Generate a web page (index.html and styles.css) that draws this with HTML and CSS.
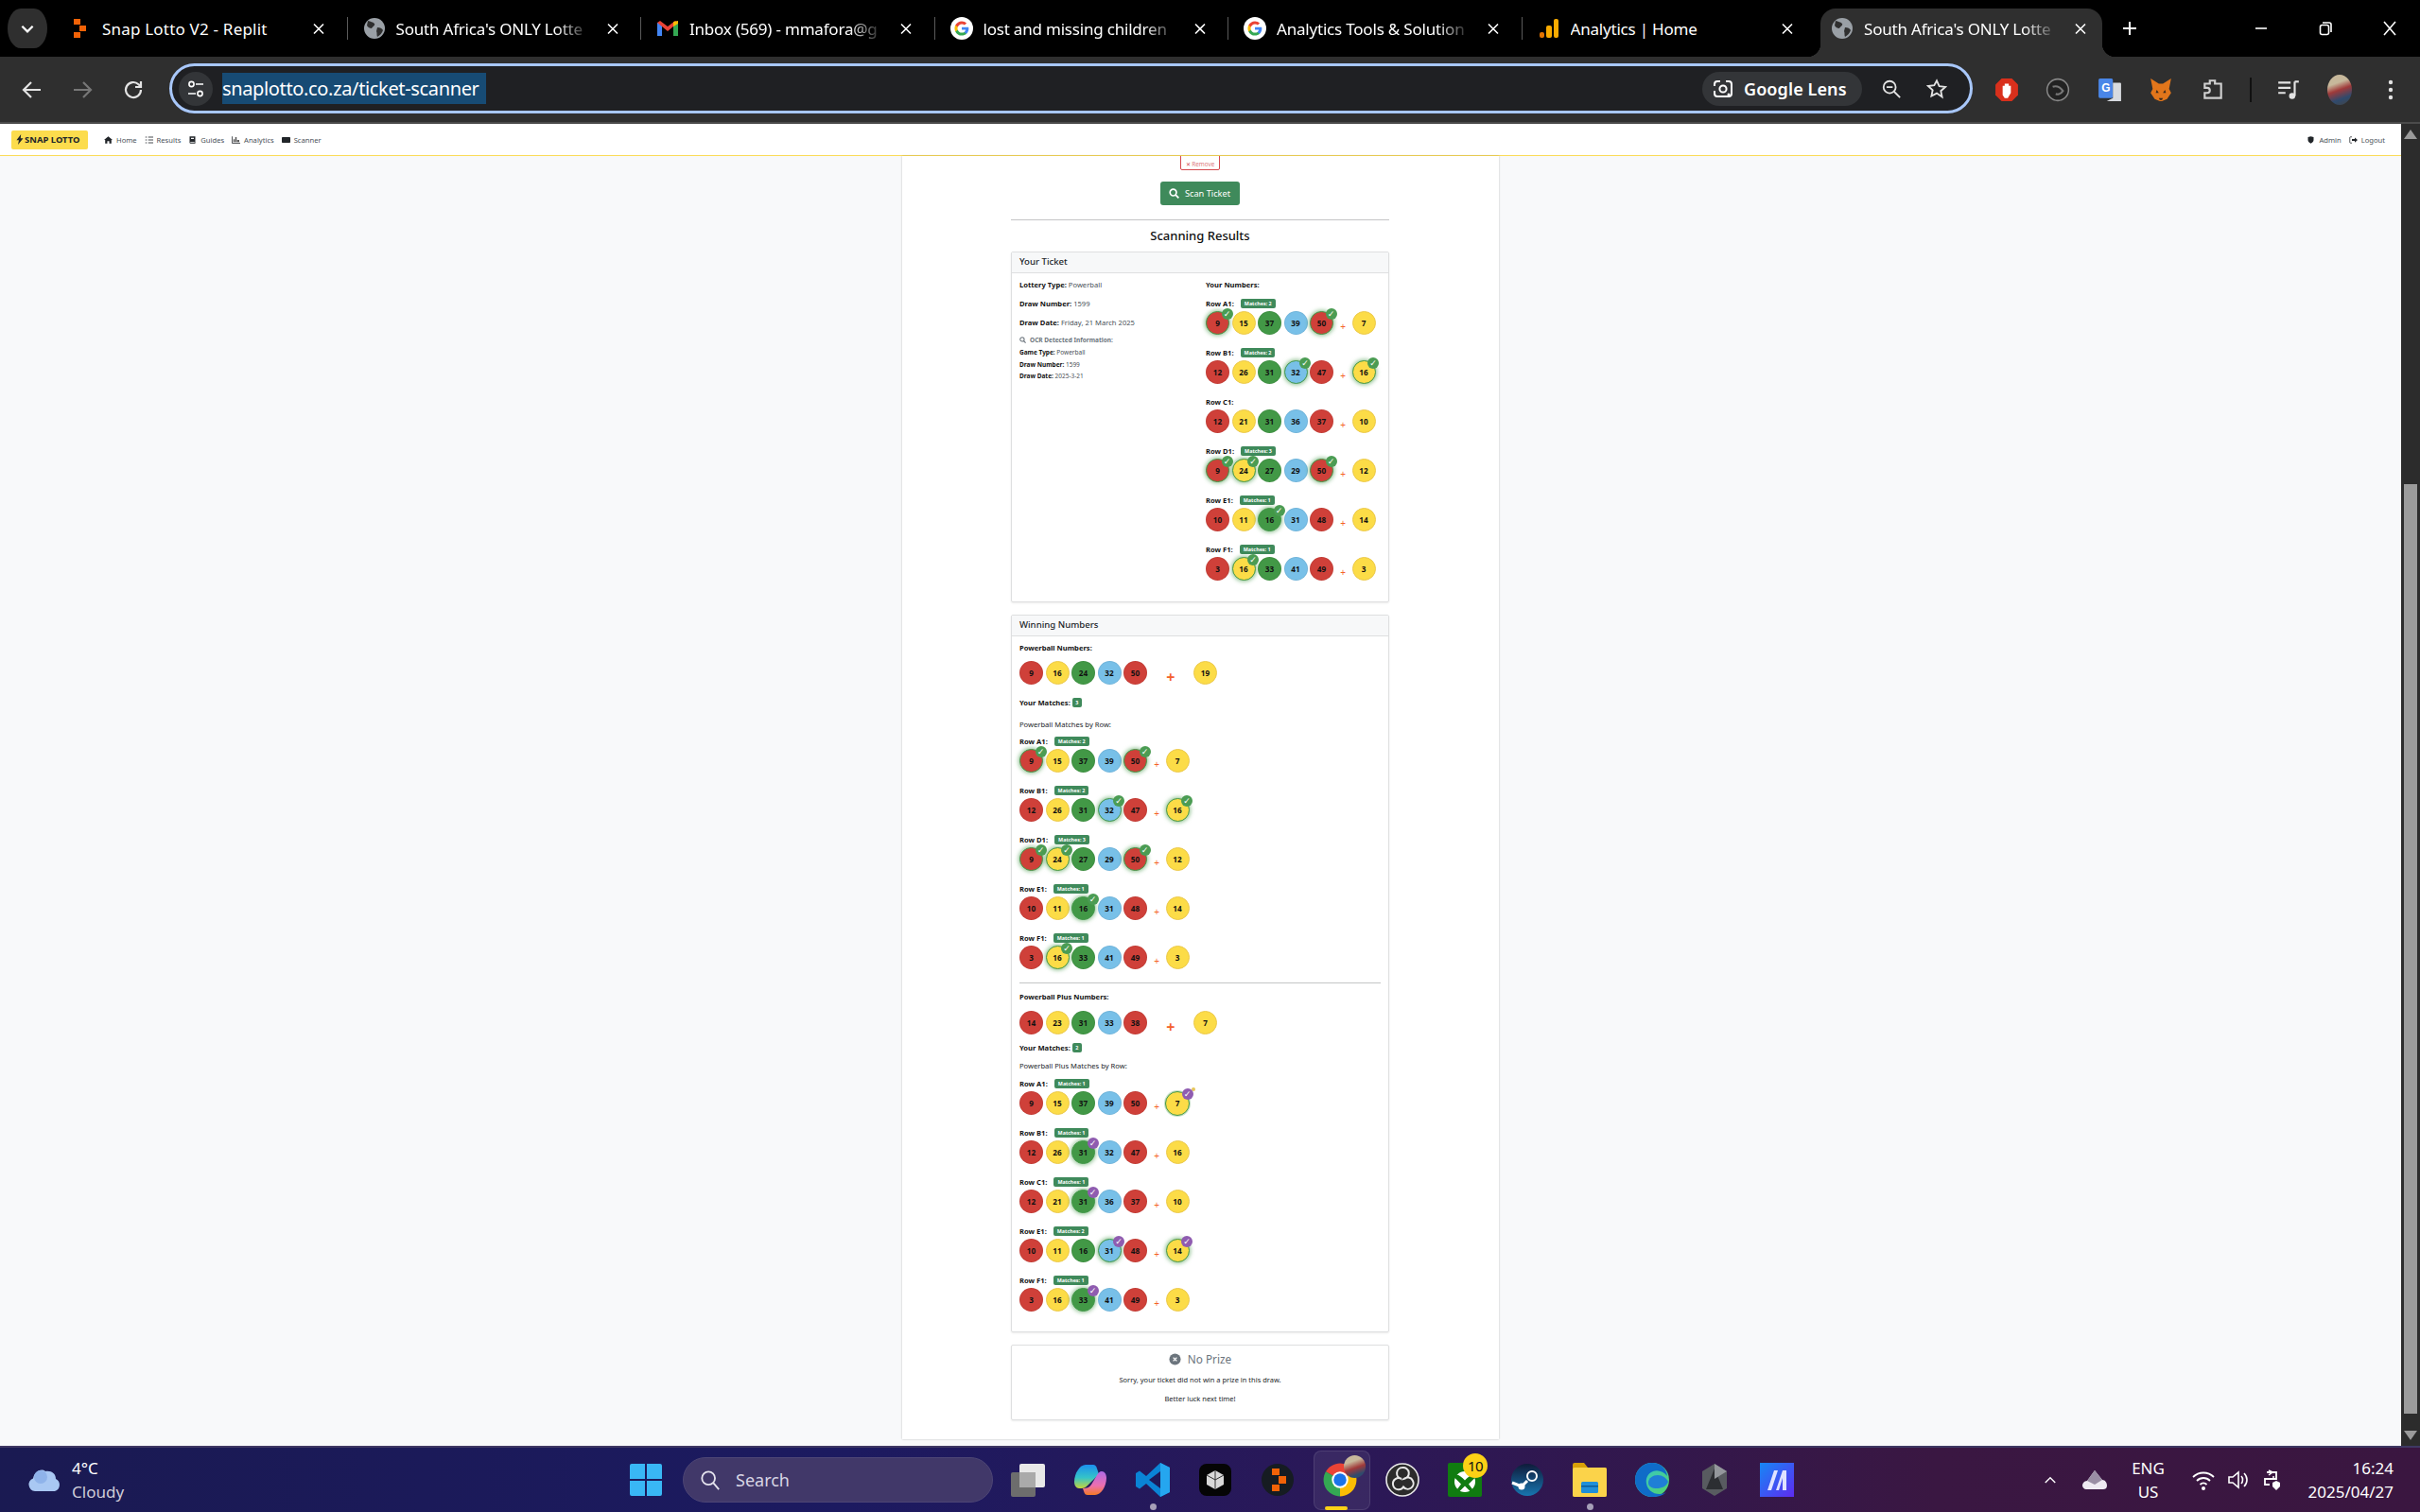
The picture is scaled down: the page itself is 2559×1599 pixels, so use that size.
FILE: index.html
```html
<!DOCTYPE html>
<html lang="en">
<head>
<meta charset="utf-8">
<title>South Africa's ONLY Lottery</title>
<link rel="stylesheet" href="styles.css">
</head>
<body>
<svg class="defs" aria-hidden="true">
  <symbol id="x" viewBox="0 0 12 12"><path d="M1 1l10 10M11 1L1 11" stroke="#fff" stroke-width="1.6" fill="none"/></symbol>
  <symbol id="globe" viewBox="0 0 24 24"><circle cx="12" cy="12" r="11" fill="#9aa0a6"/><path d="M5 4c3 1 5 1 7 3 1 2-2 3-3 5-2 0-4-1-5-3zM15 11c3 0 5 1 6 3-1 3-3 5-6 7-1-2 0-4-1-6z" fill="#2f2f2f"/></symbol>
  <symbol id="gg" viewBox="0 0 48 48"><circle cx="24" cy="24" r="24" fill="#fff"/><g transform="translate(7.5 7.5) scale(.69)"><path fill="#4285F4" d="M45.12 24.5c0-1.56-.14-3.06-.4-4.5H24v8.51h11.84c-.51 2.75-2.06 5.08-4.39 6.64v5.52h7.11c4.16-3.83 6.56-9.47 6.56-15.17z"/><path fill="#34A853" d="M24 46c5.94 0 10.92-1.97 14.56-5.33l-7.11-5.52c-1.97 1.32-4.49 2.1-7.45 2.1-5.73 0-10.58-3.87-12.31-9.07H4.34v5.7C7.96 41.07 15.4 46 24 46z"/><path fill="#FBBC05" d="M11.69 28.18C11.25 26.86 11 25.45 11 24s.25-2.86.69-4.18v-5.7H4.34C2.85 17.09 2 20.45 2 24c0 3.55.85 6.91 2.34 9.88l7.35-5.7z"/><path fill="#EA4335" d="M24 10.75c3.23 0 6.13 1.11 8.41 3.29l6.31-6.31C34.91 4.18 29.93 2 24 2 15.4 2 7.96 6.93 4.34 14.12l7.35 5.7c1.73-5.2 6.58-9.07 12.31-9.07z"/></g></symbol>
</svg>

<header class="tabstrip">
  <div class="tablist-btn"><svg class="ico-10" viewBox="0 0 12 8"><path d="M1 1.5l5 5 5-5" stroke="#fff" stroke-width="2" fill="none"/></svg></div>
  <div class="tab first">
    <svg class="fav" viewBox="0 0 24 24"><rect x="8" y="2" width="7" height="6" fill="#f26207"/><rect x="14" y="9" width="7" height="6" fill="#f26207"/><rect x="8" y="16" width="7" height="6" fill="#f26207"/></svg>
    <span class="tab-title wide">Snap Lotto V2 - Replit</span>
    <svg class="close"><use href="#x"/></svg>
  </div>
  <div class="tab sep">
    <svg class="fav"><use href="#globe"/></svg>
    <span class="tab-title fade">South Africa's ONLY Lotte</span>
    <svg class="close"><use href="#x"/></svg>
  </div>
  <div class="tab sep">
    <svg class="fav" viewBox="0 0 24 24"><path d="M1 20V6l3-2 8 6 8-6 3 2v14h-5V10l-6 5-6-5v10z" fill="#ea4335"/><path d="M1 6v14h5V10z" fill="#4285f4"/><path d="M23 6v14h-5V10z" fill="#34a853"/><path d="M18 5l5-1v3l-5 3z" fill="#fbbc04"/></svg>
    <span class="tab-title fade">Inbox (569) - mmafora@g</span>
    <svg class="close"><use href="#x"/></svg>
  </div>
  <div class="tab sep">
    <svg class="fav"><use href="#gg"/></svg>
    <span class="tab-title fade">lost and missing children</span>
    <svg class="close"><use href="#x"/></svg>
  </div>
  <div class="tab sep">
    <svg class="fav"><use href="#gg"/></svg>
    <span class="tab-title fade">Analytics Tools &amp; Solution</span>
    <svg class="close"><use href="#x"/></svg>
  </div>
  <div class="tab sep">
    <svg class="fav" viewBox="0 0 24 24"><rect x="2" y="16" width="5" height="6" rx="2" fill="#e37400"/><rect x="9" y="9" width="6" height="13" rx="2" fill="#f9ab00"/><rect x="17" y="2" width="5" height="20" rx="2" fill="#f9ab00"/></svg>
    <span class="tab-title">Analytics | Home</span>
    <svg class="close"><use href="#x"/></svg>
  </div>
  <div class="tab active">
    <svg class="fav"><use href="#globe"/></svg>
    <span class="tab-title fade">South Africa's ONLY Lotte</span>
    <svg class="close"><use href="#x"/></svg>
  </div>
  <svg class="newtab" viewBox="0 0 16 16"><path d="M8 1v14M1 8h14" stroke="#fff" stroke-width="2"/></svg>
  <div class="winctl">
    <svg class="ico-16" viewBox="0 0 16 16"><path d="M2 8h12" stroke="#fff" stroke-width="1.6"/></svg>
    <svg class="ico-16" viewBox="0 0 16 16"><rect x="2.5" y="4.5" width="9" height="10" rx="2" fill="none" stroke="#fff" stroke-width="1.6"/><path d="M5 2h7a2 2 0 0 1 2 2v8" fill="none" stroke="#fff" stroke-width="1.6"/></svg>
    <svg class="ico-16" viewBox="0 0 16 16"><path d="M2 1l12 14M14 1L2 15" stroke="#fff" stroke-width="1.6"/></svg>
  </div>
</header>

<nav class="toolbar">
  <svg class="tb-btn back" viewBox="0 0 24 24"><path d="M21 12H4M11 4l-8 8 8 8" stroke="#e3e3e3" stroke-width="2.2" fill="none"/></svg>
  <svg class="tb-btn fwd" viewBox="0 0 24 24"><path d="M3 12h17M13 4l8 8-8 8" stroke="#777" stroke-width="2.2" fill="none"/></svg>
  <svg class="tb-btn reload" viewBox="0 0 24 24"><path d="M20 12a8 8 0 1 1-2.5-5.8L20 8.5M20 3v6h-6" stroke="#e3e3e3" stroke-width="2.2" fill="none"/></svg>
  <div class="omnibox">
    <div class="site-chip"><svg class="ico-20" viewBox="0 0 20 20"><circle cx="5.5" cy="5" r="2.6" fill="none" stroke="#fff" stroke-width="1.6"/><path d="M10 5h8M2 15h8" stroke="#fff" stroke-width="1.6"/><circle cx="14.5" cy="15" r="2.6" fill="none" stroke="#fff" stroke-width="1.6"/></svg></div>
    <span class="url">snaplotto.co.za/ticket-scanner</span>
    <div class="lens">
      <svg class="ico-24" viewBox="0 0 24 24"><path d="M3 9V7a3 3 0 0 1 3-3h3M15 4h3a3 3 0 0 1 3 3v10a3 3 0 0 1-3 3H6a3 3 0 0 1-3-3v-3" fill="none" stroke="#fff" stroke-width="2"/><circle cx="12" cy="12" r="3.6" fill="none" stroke="#fff" stroke-width="2"/><circle cx="18" cy="18" r="1.5" fill="#fff"/></svg>
      <span>Google Lens</span>
    </div>
    <svg class="omni-ico" viewBox="0 0 24 24"><circle cx="10" cy="10" r="7" fill="none" stroke="#e3e3e3" stroke-width="2"/><path d="M15 15l7 7M6.5 10h7" stroke="#e3e3e3" stroke-width="2"/></svg>
    <svg class="omni-ico star" viewBox="0 0 24 24"><path d="M12 2.5l2.9 6.4 7 .8-5.2 4.7 1.4 6.9L12 17l-6.1 3.3 1.4-6.9-5.2-4.7 7-.8z" fill="none" stroke="#e3e3e3" stroke-width="2"/></svg>
  </div>
  <div class="exts">
    <svg class="ext" viewBox="0 0 24 24"><path d="M7 1h10l6 6v10l-6 6H7l-6-6V7z" fill="#d9301c"/><path d="M8 17V8h2v4-6h2v6-6h2v6-4h2v7l-3 5h-3z" fill="#fff"/></svg>
    <svg class="ext" viewBox="0 0 24 24"><circle cx="12" cy="12" r="10.5" fill="#222" stroke="#888" stroke-width="1.4"/><path d="M7 9c3-1 7 0 10 4-2 3-5 4-7 3" fill="none" stroke="#777" stroke-width="2"/></svg>
    <svg class="ext" viewBox="0 0 24 24"><rect x="1" y="1" width="14" height="19" rx="1.5" fill="#4a86e8"/><path d="M15 5h7a1 1 0 0 1 1 1v17H9l6-3z" fill="#d8dbe0"/><text class="ext-g" x="4" y="14">G</text></svg>
    <svg class="ext" viewBox="0 0 24 24"><path d="M2 1l8 5h4l8-5-2 10 2 4-4 6-5 2h-2l-5-2-4-6 2-4z" fill="#e2761b"/><path d="M8 12l2 3H7zM16 12l-2 3h3zM10 20h4l-1 2h-2z" fill="#3a2a1c"/></svg>
    <svg class="ext" viewBox="0 0 24 24"><path d="M4 6h5V3h5v3h6v14H4v-5h2.5a2 2 0 0 0 0-5H4z" fill="none" stroke="#d0d0d0" stroke-width="2"/></svg>
    <span class="ext-sep"></span>
    <svg class="ext" viewBox="0 0 24 24"><path d="M2 5h12M2 10h12M2 15h7" stroke="#e3e3e3" stroke-width="2"/><path d="M18 4v14" stroke="#e3e3e3" stroke-width="2"/><circle cx="15.5" cy="18" r="3" fill="#e3e3e3"/><path d="M18 4h4" stroke="#e3e3e3" stroke-width="2"/></svg>
    <span class="avatar"></span>
    <svg class="ext dots" viewBox="0 0 6 24"><circle cx="3" cy="4" r="2.2" fill="#e3e3e3"/><circle cx="3" cy="12" r="2.2" fill="#e3e3e3"/><circle cx="3" cy="20" r="2.2" fill="#e3e3e3"/></svg>
  </div>
</nav>

<div class="viewport">
  <main class="page">
    <div class="sitenav">
      <a class="brand"><svg class="bolt" viewBox="0 0 10 14"><path d="M6.5 0L0.5 8h3.2L2.5 14l7-8.6H6z" fill="#212529"/></svg>SNAP LOTTO</a>
      <a class="navlink first-link"><svg class="nico" viewBox="0 0 12 10"><path d="M6 0L0 5h1.6v5h3V6.8h2.8V10h3V5H12z" fill="#212529"/></svg>Home</a>
      <a class="navlink"><svg class="nico" viewBox="0 0 12 10"><path d="M5 1h7M5 5h7M5 9h7M1 1h2M1 5h2M1 9h2" stroke="#212529" stroke-width="1.1"/></svg>Results</a>
      <a class="navlink"><svg class="nico" viewBox="0 0 12 10"><path d="M2 0h8v10H3a1.6 1.6 0 0 1-1-1z" fill="#212529"/><rect x="4" y="2" width="4" height="1.6" fill="#fff"/><rect x="3" y="7.6" width="6" height="1" fill="#fff"/></svg>Guides</a>
      <a class="navlink"><svg class="nico" viewBox="0 0 12 10"><path d="M.6 0v9.5H12" fill="none" stroke="#212529" stroke-width="1.1"/><rect x="2.4" y="4" width="2" height="4" fill="#555"/><rect x="5" y="1" width="2" height="7" fill="#555"/><rect x="7.6" y="5" width="3" height="3" fill="#555"/></svg>Analytics</a>
      <a class="navlink"><svg class="nico" viewBox="0 0 12 10"><rect x="0" y="1" width="12" height="8" rx="1" fill="#212529"/></svg>Scanner</a>
      <span class="nav-spacer"></span>
      <a class="navlink"><svg class="nico" viewBox="0 0 12 10"><path d="M6 0l4 1v4c0 2.5-2 4-4 5-2-1-4-2.500-4-5V1z" fill="#212529"/></svg>Admin</a>
      <a class="navlink"><svg class="nico" viewBox="0 0 12 10"><path d="M4 .7H2a1 1 0 0 0-1 1v6.600a1 1 0 0 0 1 1h2" fill="none" stroke="#212529"/><path d="M4 3.800h4V1.500L12 5 8 8.500V6.200H4z" fill="#212529"/></svg>Logout</a>
    </div>

    <div class="card">
      <div class="col">
        <div class="remove-wrap"><span class="remove"><span class="remove-x">✕</span> Remove</span></div>
        <div class="scan-wrap"><a class="scan"><svg class="scan-ico" viewBox="0 0 12 12"><circle cx="5" cy="5" r="3.700" fill="none" stroke="#fff" stroke-width="1.800"/><path d="M7.800 7.800L11.300 11.300" stroke="#fff" stroke-width="2"/></svg>Scan Ticket</a></div>
        <hr class="rule rule-top">
        <h2 class="results-title">Scanning Results</h2>

        <section class="panel ticket">
          <h3 class="panel-head">Your Ticket</h3>
          <div class="panel-body ticket-grid">
            <div class="info">
              <p class="line"><b>Lottery Type:</b> <span class="val">Powerball</span></p>
              <p class="line"><b>Draw Number:</b> <span class="val">1599</span></p>
              <p class="line"><b>Draw Date:</b> <span class="val">Friday, 21 March 2025</span></p>
              <p class="ocr-title"><svg class="ocr-ico" viewBox="0 0 12 12"><circle cx="5" cy="5" r="3.700" fill="none" stroke="#6c757d" stroke-width="1.800"/><path d="M7.800 7.800L11.300 11.300" stroke="#6c757d" stroke-width="2"/></svg>OCR Detected Information:</p>
              <p class="ocr"><b>Game Type:</b> <span class="val">Powerball</span></p>
              <p class="ocr"><b>Draw Number:</b> <span class="val">1599</span></p>
              <p class="ocr"><b>Draw Date:</b> <span class="val">2025-3-21</span></p>
            </div>
            <div class="numbers">
              <p class="line line-num"><b>Your Numbers:</b></p>
              <div class="row"><div class="row-head"><b>Row A1:</b><span class="badge">Matches: 2</span></div><div class="balls"><span class="ball red hit">9</span><span class="ball yellow">15</span><span class="ball green">37</span><span class="ball blue">39</span><span class="ball red hit">50</span><span class="plus">+</span><span class="ball yellow">7</span></div></div>
              <div class="row"><div class="row-head"><b>Row B1:</b><span class="badge">Matches: 2</span></div><div class="balls"><span class="ball red">12</span><span class="ball yellow">26</span><span class="ball green">31</span><span class="ball blue hit">32</span><span class="ball red">47</span><span class="plus">+</span><span class="ball yellow hit">16</span></div></div>
              <div class="row"><div class="row-head"><b>Row C1:</b></div><div class="balls"><span class="ball red">12</span><span class="ball yellow">21</span><span class="ball green">31</span><span class="ball blue">36</span><span class="ball red">37</span><span class="plus">+</span><span class="ball yellow">10</span></div></div>
              <div class="row"><div class="row-head"><b>Row D1:</b><span class="badge">Matches: 3</span></div><div class="balls"><span class="ball red hit">9</span><span class="ball yellow hit">24</span><span class="ball green">27</span><span class="ball blue">29</span><span class="ball red hit">50</span><span class="plus">+</span><span class="ball yellow">12</span></div></div>
              <div class="row"><div class="row-head"><b>Row E1:</b><span class="badge">Matches: 1</span></div><div class="balls"><span class="ball red">10</span><span class="ball yellow">11</span><span class="ball green hit">16</span><span class="ball blue">31</span><span class="ball red">48</span><span class="plus">+</span><span class="ball yellow">14</span></div></div>
              <div class="row"><div class="row-head"><b>Row F1:</b><span class="badge">Matches: 1</span></div><div class="balls"><span class="ball red">3</span><span class="ball yellow hit">16</span><span class="ball green">33</span><span class="ball blue">41</span><span class="ball red">49</span><span class="plus">+</span><span class="ball yellow">3</span></div></div>
            </div>
          </div>
        </section>

        <section class="panel winning">
          <h3 class="panel-head">Winning Numbers</h3>
          <div class="panel-body">
            <p class="line draw-title"><b>Powerball Numbers:</b></p>
            <div class="balls draw-balls"><span class="ball red">9</span><span class="ball yellow">16</span><span class="ball green">24</span><span class="ball blue">32</span><span class="ball red">50</span><span class="plus big">+</span><span class="ball yellow">19</span></div>
            <p class="line matches-a"><b>Your Matches:</b> <span class="badge tiny">3</span></p>
            <p class="line by-row">Powerball Matches by Row:</p>
            <div class="row"><div class="row-head"><b>Row A1:</b><span class="badge">Matches: 2</span></div><div class="balls"><span class="ball red hit">9</span><span class="ball yellow">15</span><span class="ball green">37</span><span class="ball blue">39</span><span class="ball red hit">50</span><span class="plus">+</span><span class="ball yellow">7</span></div></div>
            <div class="row"><div class="row-head"><b>Row B1:</b><span class="badge">Matches: 2</span></div><div class="balls"><span class="ball red">12</span><span class="ball yellow">26</span><span class="ball green">31</span><span class="ball blue hit">32</span><span class="ball red">47</span><span class="plus">+</span><span class="ball yellow hit">16</span></div></div>
            <div class="row"><div class="row-head"><b>Row D1:</b><span class="badge">Matches: 3</span></div><div class="balls"><span class="ball red hit">9</span><span class="ball yellow hit">24</span><span class="ball green">27</span><span class="ball blue">29</span><span class="ball red hit">50</span><span class="plus">+</span><span class="ball yellow">12</span></div></div>
            <div class="row"><div class="row-head"><b>Row E1:</b><span class="badge">Matches: 1</span></div><div class="balls"><span class="ball red">10</span><span class="ball yellow">11</span><span class="ball green hit">16</span><span class="ball blue">31</span><span class="ball red">48</span><span class="plus">+</span><span class="ball yellow">14</span></div></div>
            <div class="row"><div class="row-head"><b>Row F1:</b><span class="badge">Matches: 1</span></div><div class="balls"><span class="ball red">3</span><span class="ball yellow hit">16</span><span class="ball green">33</span><span class="ball blue">41</span><span class="ball red">49</span><span class="plus">+</span><span class="ball yellow">3</span></div></div>
            <hr class="rule">
            <p class="line plus-title"><b>Powerball Plus Numbers:</b></p>
            <div class="balls plus-balls"><span class="ball red">14</span><span class="ball yellow">23</span><span class="ball green">31</span><span class="ball blue">33</span><span class="ball red">38</span><span class="plus big">+</span><span class="ball yellow">7</span></div>
            <p class="line matches-b"><b>Your Matches:</b> <span class="badge tiny">2</span></p>
            <p class="line by-row-b">Powerball Plus Matches by Row:</p>
            <div class="row"><div class="row-head"><b>Row A1:</b><span class="badge">Matches: 1</span></div><div class="balls"><span class="ball red">9</span><span class="ball yellow">15</span><span class="ball green">37</span><span class="ball blue">39</span><span class="ball red">50</span><span class="plus">+</span><span class="ball yellow hit pp star">7</span></div></div>
            <div class="row"><div class="row-head"><b>Row B1:</b><span class="badge">Matches: 1</span></div><div class="balls"><span class="ball red">12</span><span class="ball yellow">26</span><span class="ball green hit pp">31</span><span class="ball blue">32</span><span class="ball red">47</span><span class="plus">+</span><span class="ball yellow">16</span></div></div>
            <div class="row"><div class="row-head"><b>Row C1:</b><span class="badge">Matches: 1</span></div><div class="balls"><span class="ball red">12</span><span class="ball yellow">21</span><span class="ball green hit pp">31</span><span class="ball blue">36</span><span class="ball red">37</span><span class="plus">+</span><span class="ball yellow">10</span></div></div>
            <div class="row"><div class="row-head"><b>Row E1:</b><span class="badge">Matches: 2</span></div><div class="balls"><span class="ball red">10</span><span class="ball yellow">11</span><span class="ball green">16</span><span class="ball blue hit pp">31</span><span class="ball red">48</span><span class="plus">+</span><span class="ball yellow hit pp">14</span></div></div>
            <div class="row"><div class="row-head"><b>Row F1:</b><span class="badge">Matches: 1</span></div><div class="balls"><span class="ball red">3</span><span class="ball yellow">16</span><span class="ball green hit pp">33</span><span class="ball blue">41</span><span class="ball red">49</span><span class="plus">+</span><span class="ball yellow">3</span></div></div>
          </div>
        </section>

        <section class="panel prize">
          <h3 class="prize-title"><svg class="prize-ico" viewBox="0 0 14 14"><circle cx="7" cy="7" r="6.500" fill="#6c757d"/><path d="M5 5l4 4M9 5l-4 4" stroke="#fff" stroke-width="1.400"/></svg>No Prize</h3>
          <p class="prize-text">Sorry, your ticket did not win a prize in this draw.</p>
          <p class="prize-text">Better luck next time!</p>
        </section>
      </div>
    </div>
  </main>
  <aside class="scrollbar">
    <span class="sb-up"></span>
    <div class="sb-track"><span class="sb-thumb"></span></div>
    <span class="sb-down"></span>
  </aside>
</div>

<footer class="taskbar">
  <div class="weather">
    <svg class="cloud" viewBox="0 0 36 26"><path d="M8 25a7 7 0 0 1-2-13.500C7 5 14 0 19 4c6-1 11 2 11 8a7 7 0 0 1-1 13z" fill="#a9c8f3"/><circle cx="14" cy="10" r="7" fill="#8fb3ea"/></svg>
    <div class="weather-text"><span>4°C</span><span class="dim">Cloudy</span></div>
  </div>
  <div class="slot win-slot"><svg class="ic-34" viewBox="0 0 34 34"><path d="M0 2a2 2 0 0 1 2-2h14v16H0zM18 0h14a2 2 0 0 1 2 2v14H18zM0 18h16v16H2a2 2 0 0 1-2-2zM18 18h16v14a2 2 0 0 1-2 2H18z" fill="#39b7f5"/></svg></div>
  <div class="search"><svg class="search-ico" viewBox="0 0 24 24"><circle cx="10" cy="10" r="7.500" fill="none" stroke="#e5e3ee" stroke-width="2"/><path d="M15.500 15.500L22 23" stroke="#e5e3ee" stroke-width="2"/></svg><span>Search</span></div>
  <div class="slots">
    <div class="slot"><svg class="ic-36" viewBox="0 0 36 36"><rect x="0" y="10" width="26" height="26" rx="2" fill="#6d6d6d"/><rect x="9" y="1" width="27" height="25" rx="2" fill="#e8e8e8"/><rect x="9" y="10" width="17" height="16" fill="#aaa"/></svg></div>
    <div class="slot"><svg class="ic-34" viewBox="0 0 34 34"><defs><linearGradient id="cpa" x1="0" y1="0" x2="0" y2="1"><stop offset="0" stop-color="#1b8fee"/><stop offset=".55" stop-color="#35c4c8"/><stop offset="1" stop-color="#c6d43a"/></linearGradient><linearGradient id="cpb" x1="0" y1="0" x2="0" y2="1"><stop offset="0" stop-color="#b06ae6"/><stop offset=".6" stop-color="#ec6fb0"/><stop offset="1" stop-color="#f47a25"/></linearGradient></defs><path d="M12 1h8c2 0 3 1 4 4l2 6-12 12c-2 2-4 3-6 3H5c-3 0-5-3-5-7C0 10 6 1 12 1z" fill="url(#cpa)"/><path d="M29 8c3 0 5 3 5 7 0 9-6 18-12 18h-8c-2 0-3-1-4-4l-1-3c4 0 7-1 9-4l6-10c1-2 3-4 5-4z" fill="url(#cpb)"/></svg></div>
    <div class="slot"><svg class="ic-36" viewBox="0 0 36 36"><path d="M26 0l10 5v26l-10 5-15-14-7 5.500L0 25v-14l4-2.500 7 5.500z" fill="#0a84d6"/><path d="M26 9v18l-12-9z" fill="#1d1a5a"/><path d="M26 0l10 5v26l-10 5z" fill="#25a6ef"/></svg><i class="dot"></i></div>
    <div class="slot"><svg class="ic-34" viewBox="0 0 34 34"><rect width="34" height="34" rx="8" fill="#050505"/><path d="M17 7l9 5v10l-9 5-9-5V12z" fill="#d8d8d8"/><path d="M17 7v10l9-5M17 17l-9-5M17 17v10" stroke="#333" fill="none"/></svg></div>
    <div class="slot"><svg class="ic-34" viewBox="0 0 34 34"><circle cx="17" cy="17" r="17" fill="#161c22"/><rect x="11" y="5" width="8" height="7" fill="#f26207"/><rect x="18" y="13" width="8" height="8" fill="#f26207"/><rect x="11" y="22" width="8" height="7" fill="#f26207"/></svg></div>
    <div class="slot chrome-slot">
      <svg class="ic-38" viewBox="0 0 48 48"><path d="M24 24L4.950 13A22 22 0 0 1 43.050 13Z" fill="#ea4335"/><path d="M24 24L43.050 13A22 22 0 0 1 24 46Z" fill="#fbbc04"/><path d="M24 24L24 46A22 22 0 0 1 4.950 13Z" fill="#34a853"/><circle cx="24" cy="24" r="11" fill="#fff"/><circle cx="24" cy="24" r="8.500" fill="#1a73e8"/></svg>
      <span class="chrome-avatar"></span>
      <i class="active-bar"></i>
    </div>
    <div class="slot"><svg class="ic-36" viewBox="0 0 36 36"><circle cx="18" cy="18" r="17" fill="#2b2b2b" stroke="#e8e8e8" stroke-width="1.600"/><path d="M18 5a6 6 0 0 0-1 11.900 6 6 0 0 0-9 6.100 6 6 0 0 0 11 2.500 6 6 0 0 0 10-6.500A6 6 0 0 0 19.500 17 6 6 0 0 0 18 5z" fill="none" stroke="#e8e8e8" stroke-width="2"/></svg></div>
    <div class="slot xbox"><svg class="ic-36" viewBox="0 0 36 36"><rect width="36" height="36" rx="2" fill="#107c10"/><circle cx="18" cy="20" r="11" fill="#fff"/><path d="M18 18.500c3-3 6-6 9-6l2 3-7 7 6 8h-4l-6-6-6 6H8l6-8-7-7 2-3c3 0 6 3 9 6z" fill="#107c10"/></svg><span class="xbox-badge">10</span></div>
    <div class="slot"><svg class="ic-34" viewBox="0 0 34 34"><defs><linearGradient id="st" x1="0" y1="0" x2="0" y2="1"><stop offset="0" stop-color="#0f1b3a"/><stop offset="1" stop-color="#1776b0"/></linearGradient></defs><circle cx="17" cy="17" r="17" fill="url(#st)"/><circle cx="22" cy="13" r="5" fill="none" stroke="#fff" stroke-width="2"/><path d="M1 20l10 4 6-6" stroke="#fff" stroke-width="3" fill="none"/><circle cx="11" cy="24" r="3.500" fill="#fff"/></svg></div>
    <div class="slot"><svg class="ic-36" viewBox="0 0 36 36"><path d="M0 2a2 2 0 0 1 2-2h10l4 5h18a2 2 0 0 1 2 2v27a2 2 0 0 1-2 2H2a2 2 0 0 1-2-2z" fill="#d9a008"/><rect y="5" width="36" height="31" rx="2" fill="#fbd34a"/><rect x="9" y="20" width="18" height="12" rx="1.500" fill="#1f8fd8"/><rect x="9" y="24" width="18" height="1.500" fill="#0b5a96"/></svg><i class="dot"></i></div>
    <div class="slot"><svg class="ic-36" viewBox="0 0 36 36"><defs><linearGradient id="ed" x1="0" y1="0" x2="1" y2="1"><stop offset="0" stop-color="#2fc4dd"/><stop offset="1" stop-color="#55d464"/></linearGradient></defs><circle cx="18" cy="18" r="18" fill="url(#ed)"/><path d="M0 18C0 8 8 0 18 0c9 0 15 6 16 14-4-5-10-7-15-5-6 2-8 8-7 13 1 6 6 11 14 11 3 0 5-1 7-2-4 4-9 5-15 5C8 36 0 28 0 18z" fill="#0f6cc8"/><path d="M14 21c0-5 5-8 10-8 5 0 9 3 11 7-2 5-7 7-12 7-5 0-9-2-9-6z" fill="#1f7fd6"/></svg></div>
    <div class="slot"><svg class="ic-34" viewBox="0 0 34 34"><path d="M17 0l13 8v18l-13 8-13-8V8z" fill="#585b60"/><path d="M17 5l9 22H8z" fill="#2c2e32"/><path d="M17 0l13 8-13 8z" fill="#94979c"/></svg></div>
    <div class="slot"><svg class="ic-36" viewBox="0 0 36 36"><defs><linearGradient id="ai" x1="0" y1="0" x2="1" y2="1"><stop offset="0" stop-color="#1687f5"/><stop offset="1" stop-color="#5e2bf0"/></linearGradient></defs><rect width="36" height="36" fill="url(#ai)"/><path d="M8 29L15 8h4L12 29zM17 29L24 8h4v21h-4v-13l-4 13z" fill="#dfe3ff"/></svg></div>
  </div>
  <div class="tray">
    <svg class="tray-chev" viewBox="0 0 16 10"><path d="M2 8.500l6-6 6 6" stroke="#fff" stroke-width="1.600" fill="none"/></svg>
    <svg class="tray-drive" viewBox="0 0 26 22"><path d="M13 1l8 10c3 0 5 3 5 6s-2 4-4 4H4c-2 0-4-2-4-4s2-5 5-5z" fill="#efeaf2"/><path d="M13 1l-8 11 8 4 8-5z" fill="#9a8ea4"/></svg>
    <div class="lang"><span>ENG</span><span>US</span></div>
    <svg class="tray-ic wifi" viewBox="0 0 24 24"><path d="M1 9c6-6 16-6 22 0M5 13c4-4 10-4 14 0M8.500 17c2-2 5-2 7 0" fill="none" stroke="#fff" stroke-width="1.800"/><circle cx="12" cy="21" r="2" fill="#fff"/></svg>
    <svg class="tray-ic" viewBox="0 0 24 24"><path d="M2 9h4l6-5v16l-6-5H2z" fill="none" stroke="#fff" stroke-width="1.600"/><path d="M15 8c2 2 2 6 0 8M18 5c4 4 4 10 0 14" fill="none" stroke="#fff" stroke-width="1.600"/></svg>
    <svg class="tray-ic batt" viewBox="0 0 24 24"><path d="M7 4h10v7H5v6h5" fill="none" stroke="#fff" stroke-width="1.800"/><path d="M9 2l4 2-4 3M14 8v4" stroke="#fff" stroke-width="1.500" fill="none"/><path d="M13 15l4-2 4 2v4l-4 4-4-4z" fill="#fff"/></svg>
    <div class="clock"><span>16:24</span><span>2025/04/27</span></div>
  </div>
</footer>
</body>
</html>
```

FILE: styles.css
```css
* { box-sizing: border-box; }
html, body { margin: 0; padding: 0; width: 2559px; height: 1599px; overflow: hidden; background: #000; font-family: "Noto Sans", "Open Sans", sans-serif; }
p, h2, h3 { margin: 0; font-weight: normal; }
svg { display: block; flex: none; }
.defs { position: absolute; width: 0; height: 0; }

/* tab strip */
.tabstrip { height: 60px; background: #000; display: flex; padding-left: 8px; position: relative; }
.tablist-btn { width: 42px; height: 42px; margin-top: 9px; border-radius: 14px / 21px; background: #2f2f2f; display: flex; align-items: center; justify-content: center; margin-right: 6px; }
.ico-10 { width: 14px; height: 9px; }
.tab { width: 310.5px; height: 51px; margin-top: 9px; padding-left: 17px; display: flex; align-items: center; position: relative; color: #fff; font-size: 17px; flex: none; }
.tab.first { padding-left: 14px; }
.tab.sep::before { content: ""; position: absolute; left: 0; top: 9px; width: 1px; height: 24px; background: #5a5a5a; }
.tab.active { width: 298px; margin-left: 6px; padding-left: 11px; background: #2f2f2f; border-radius: 16px 16px 0 0; }
.tab.active::before, .tab.active::after { content: ""; position: absolute; bottom: 0; width: 14px; height: 14px; background: radial-gradient(circle at 0 0, transparent 14px, #2f2f2f 14.5px); }
.tab.active::before { left: -14px; }
.tab.active::after { right: -14px; background: radial-gradient(circle at 100% 0, transparent 14px, #2f2f2f 14.5px); }
.fav { width: 24px; height: 24px; margin-top: -9px; }
.tab-title { margin-left: 11px; width: 206px; white-space: nowrap; overflow: hidden; margin-top: -9px; letter-spacing: -.2px; }
.tab-title.wide { letter-spacing: .2px; }
.tab.first .tab-title { margin-left: 14px; }
.tab-title.fade { -webkit-mask-image: linear-gradient(90deg, #000 82%, transparent 100%); mask-image: linear-gradient(90deg, #000 82%, transparent 100%); color: #fff; }
.close { width: 12px; height: 13px; margin-left: 17px; margin-top: -9px; }
.newtab { width: 16px; height: 16px; margin: 22px 0 0 21px; }
.winctl { margin-left: auto; display: flex; padding: 22px 24px 0 0; gap: 52px; }
.ico-16 { width: 16px; height: 16px; }

/* toolbar */
.toolbar { height: 71px; background: #2f2f2f; border-bottom: 2px solid #4b4b4b; display: flex; align-items: flex-start; }
.tb-btn { width: 24px; height: 24px; margin-top: 23px; }
.tb-btn.back { margin-left: 22px; }
.tb-btn.fwd { margin-left: 29px; }
.tb-btn.reload { margin-left: 29.500px; }
.omnibox { width: 1907px; height: 53px; margin: 7px 0 0 26.500px; border: 3px solid #a8c7fa; border-radius: 27px; background: #1f2023; display: flex; align-items: center; padding-left: 7px; }
.site-chip { width: 36px; height: 36px; border-radius: 50%; background: #333538; display: flex; align-items: center; justify-content: center; }
.ico-20 { width: 20px; height: 20px; }
.url { height: 33px; line-height: 33px; width: 279px; margin-left: 10px; background: #174b74; color: #fff; font-size: 20px; letter-spacing: -.35px; white-space: nowrap; overflow: hidden; }
.lens { margin-left: auto; width: 169px; height: 36px; border-radius: 18px; background: #333538; display: flex; align-items: center; padding-left: 10px; color: #fff; font-size: 18px; font-weight: 600; gap: 10px; letter-spacing: .1px; white-space: nowrap; }
.ico-24 { width: 24px; height: 24px; }
.omni-ico { width: 22px; height: 22px; margin-left: 20px; }
.omni-ico.star { margin-left: 26px; margin-right: 24px; }
.exts { display: flex; align-items: center; height: 30px; margin-top: 20px; margin-left: 23px; }
.ext { width: 26px; height: 26px; margin-right: 28.400px; }
.ext-g { font: bold 11px "Liberation Sans", sans-serif; fill: #fff; }
.ext-sep { width: 2px; height: 26px; background: #111; margin: 0 26px 0 -2px; }
.avatar { width: 26px; height: 32px; border-radius: 50%; background: linear-gradient(160deg, #c7b89b 0 30%, #a03a3a 50%, #2f4a6d 75%, #444); margin: 0 38px 0 0; flex: none; }
.dots { width: 6px; margin: 0; }

/* viewport */
.viewport { height: 1398px; display: flex; background: #f8f9fa; }
.page { width: 2539px; height: 1398px; overflow: hidden; display: flex; flex-direction: column; }
.sitenav { height: 34px; flex: none; background: #fff; border-bottom: 1px solid #fbdc58; display: flex; align-items: center; padding: 0 17px 0 12px; font-size: 7.6px; color: #495057; }
.brand { width: 81px; height: 20px; background: #fcdc4d; border-radius: 2px; display: flex; align-items: center; padding-left: 5px; color: #212529; font-weight: 700; font-size: 9.4px; letter-spacing: .05px; white-space: nowrap; }
.bolt { width: 8px; height: 11px; margin-right: 1px; }
.navlink { display: flex; align-items: center; margin-right: 8px; gap: 4px; white-space: nowrap; }
.first-link { margin-left: 17px; }
.navlink:last-child { margin-right: 0; }
.nico { width: 9px; height: 8px; }
.nav-spacer { flex: 1; }

.card { width: 631px; height: 1357px; margin: 0 auto; flex: none; background: #fff; box-shadow: 0 0 2px rgba(0,0,0,.25); overflow: hidden; padding-left: 115px; }
.col { width: 400px; color: #212529; }
.remove-wrap { display: flex; justify-content: center; height: 15px; overflow: hidden; }
.remove { width: 42px; height: 19px; margin-top: -4px; border: 1px solid #d4494f; border-radius: 2px; font-size: 6.4px; line-height: 17px; padding-top: 3px; color: #dd7a80; text-align: center; white-space: nowrap; }
.remove-x { color: #d4494f; }
.scan-wrap { display: flex; justify-content: center; margin-top: 12px; }
.scan { width: 84px; height: 25px; background: #3f8a5b; border-radius: 3px; color: #fff; font-size: 9.2px; display: flex; align-items: center; padding-left: 9px; white-space: nowrap; }
.scan-ico { width: 11px; height: 11px; margin-right: 6px; }
.rule { border: 0; height: 1px; background: #c4c5c6; margin: 0; }
.rule-top { margin-top: 15px; }
.results-title { font-size: 13px; line-height: 18px; height: 18px; margin-top: 7px; text-align: center; font-weight: 500; color: #111; }

.panel { border: 1px solid #dedfe0; border-radius: 2px; box-shadow: 0 1px 2px rgba(0,0,0,.08); }
.panel-head { height: 22px; line-height: 20px; padding-left: 8px; background: #f7f8f9; border-bottom: 1px solid #dedfe0; font-size: 9.6px; font-weight: 500; color: #212529; }
.ticket { margin-top: 8px; height: 371px; }
.winning { margin-top: 13px; height: 759px; }
.panel-body { padding: 6.500px 8px 0; }
.ticket-grid { display: grid; grid-template-columns: 197px 1fr; }
.line { font-size: 7.6px; line-height: 11px; height: 11px; margin-bottom: 9px; white-space: nowrap; }
.line b, .ocr b, .row-head b { font-weight: 700; color: #111; }
.val { color: #495057; }
.ocr-title { font-size: 6.5px; line-height: 10px; font-weight: 700; color: #6c757d; display: flex; align-items: center; margin-top: -1px; white-space: nowrap; }
.ocr-ico { width: 7px; height: 7px; margin-right: 4px; }
.ocr { font-size: 6.5px; line-height: 10px; height: 10px; margin-top: 2.500px; white-space: nowrap; }
.ocr-title + .ocr { margin-top: 3.500px; }

.row { margin-bottom: 14px; }
.row-head { height: 11px; margin-bottom: 2px; display: flex; align-items: center; font-size: 7.6px; white-space: nowrap; }
.badge { background: #3f8a5b; color: #fff; font-weight: 700; font-size: 5.4px; height: 10px; line-height: 10px; padding: 0 4px; border-radius: 2px; margin-left: 7px; display: inline-block; white-space: nowrap; }
.badge.tiny { margin-left: 0; padding: 0 3.500px; vertical-align: middle; position: relative; top: -.5px; }
.balls { display: flex; align-items: flex-start; gap: 2.500px; height: 25px; }
.ball { width: 25px; height: 25px; border-radius: 50%; flex: none; display: flex; align-items: center; justify-content: center; font-size: 8.2px; font-weight: 700; color: #111; position: relative; border: 1px solid rgba(0,0,0,.06); }
.ball.red { background: #cf4039; }
.ball.yellow { background: #fcdc47; border-color: #ecc94a; }
.ball.green { background: #429846; }
.ball.blue { background: #78c0e8; }
.ball.hit { border: 1px solid #42984a; box-shadow: 0 0 4px 1px rgba(66,152,70,.6); }
.ball.hit::after { content: "✓"; position: absolute; right: -4.500px; top: -3.500px; width: 12px; height: 12px; border-radius: 50%; background: #4b9c53; color: #fff; font: bold 9px/12px "DejaVu Sans", sans-serif; text-align: center; }
.ball.pp::after { background: #8f5cb0; }
.ball.star { width: 26px; height: 26px; margin: 0 0 0 -.5px; box-shadow: 0 0 0 1px rgba(66,152,70,.3); border-width: 1.500px; }
.ball.star::before { content: ""; position: absolute; right: -7px; top: -5px; width: 4px; height: 4px; border-radius: 50%; background: #e6c65a; }
.plus { width: 15px; flex: none; margin-right: -.5px; color: #f4622a; font-size: 10px; line-height: 25px; height: 25px; text-align: center; padding-top: 4px; }
.plus.big { width: 44.500px; font-size: 16px; font-weight: 700; padding-top: 5px; }

.winning .panel-body { padding-top: 7px; }
.draw-title { margin-bottom: 7.500px; }
.draw-balls { margin-bottom: 14.500px; }
.matches-a { margin-bottom: 12px; }
.by-row { margin-bottom: 6.500px; }
.plus-title { margin-top: 9px; margin-bottom: 9px; }
.plus-balls { margin-bottom: 9px; }
.matches-b { margin-bottom: 8px; }
.by-row-b { margin-bottom: 8px; }

.prize { margin-top: 13px; height: 80px; text-align: center; padding-top: 6px; }
.prize-title { font-size: 11.8px; line-height: 16px; color: #6c757d; display: flex; align-items: center; justify-content: center; gap: 7px; }
.prize-ico { width: 13px; height: 13px; }
.prize-text { font-size: 7.5px; line-height: 10px; margin-top: 10px; color: #212529; }
.prize-title + .prize-text { margin-top: 8.500px; }

/* scrollbar */
.scrollbar { width: 20px; height: 1398px; background: #2c2c2c; display: flex; flex-direction: column; align-items: center; }
.sb-up, .sb-down { width: 0; height: 0; border-left: 7px solid transparent; border-right: 7px solid transparent; flex: none; }
.sb-up { border-bottom: 10px solid #9b9b9b; margin-top: 6px; }
.sb-down { border-top: 10px solid #9b9b9b; margin-bottom: 6px; }
.sb-track { flex: 1; width: 100%; padding-top: 365px; padding-bottom: 18px; display: flex; justify-content: center; }
.sb-thumb { width: 14px; background: #9b9b9b; flex: 1; max-width: 14px; }

/* taskbar */
.taskbar { height: 70px; display: flex; align-items: center; color: #fff; background: linear-gradient(90deg, #1a1a52 0, #1c1a60 35%, #2a1858 55%, #3a1742 80%, #3a1640 100%); border-top: 2px solid #3f3863; position: relative; }
.weather { width: 650px; display: flex; align-items: center; padding-left: 29px; gap: 11px; flex: none; }
.cloud { width: 36px; height: 26px; }
.weather-text { display: flex; flex-direction: column; font-size: 17px; line-height: 25px; }
.dim { color: #cfcdd9; }
.slot { width: 66px; height: 68px; display: flex; align-items: center; justify-content: center; position: relative; flex: none; }
.win-slot { margin-right: 6px; }
.ic-34 { width: 34px; height: 34px; }
.ic-36 { width: 36px; height: 36px; }
.ic-38 { width: 38px; height: 38px; }
.search { width: 328px; height: 48px; border-radius: 24px; background: #413869; display: flex; align-items: center; padding-left: 17px; color: #d8d5e4; font-size: 18px; gap: 16px; flex: none; border: 1px solid #4d4575; margin-right: 4px; }
.search-ico { width: 22px; height: 24px; }
.slots { display: flex; flex: none; }
.dot { position: absolute; bottom: 2px; left: 30px; width: 7px; height: 7px; border-radius: 50%; background: #a69fb8; }
.chrome-slot::before { content: ""; position: absolute; left: 5px; top: 3px; width: 58px; height: 61px; border-radius: 8px; background: rgba(255,255,255,.07); border: 1px solid rgba(255,255,255,.1); }
.chrome-slot .ic-38 { position: relative; }
.chrome-avatar { position: absolute; left: 37px; top: 8px; width: 23px; height: 24px; border-radius: 50%; background: linear-gradient(160deg, #c7b89b 0 30%, #a03a3a 55%, #2f4a6d 80%); }
.active-bar { position: absolute; left: 17px; bottom: 2px; width: 24px; height: 4px; border-radius: 2px; background: #fcd116; }
.xbox-badge { position: absolute; left: 31px; top: 6px; width: 26px; height: 26px; border-radius: 50%; background: #fcd116; color: #111; font-size: 15px; line-height: 26px; text-align: center; letter-spacing: -.5px; }
.tray { margin-left: auto; display: flex; align-items: center; padding-right: 28px; flex: none; }
.tray-chev { width: 14px; height: 10px; }
.tray-drive { width: 26px; height: 22px; margin-left: 27px; }
.lang { display: flex; flex-direction: column; align-items: center; font-size: 17px; line-height: 25px; width: 40px; margin-left: 24px; }
.tray-ic { width: 24px; height: 26px; margin-left: 13px; }
.tray-ic.wifi { margin-left: 26px; }
.tray-ic.batt { margin-left: 11px; }
.clock { display: flex; flex-direction: column; align-items: flex-end; font-size: 17px; line-height: 25px; margin-left: 27px; white-space: nowrap; }
```
